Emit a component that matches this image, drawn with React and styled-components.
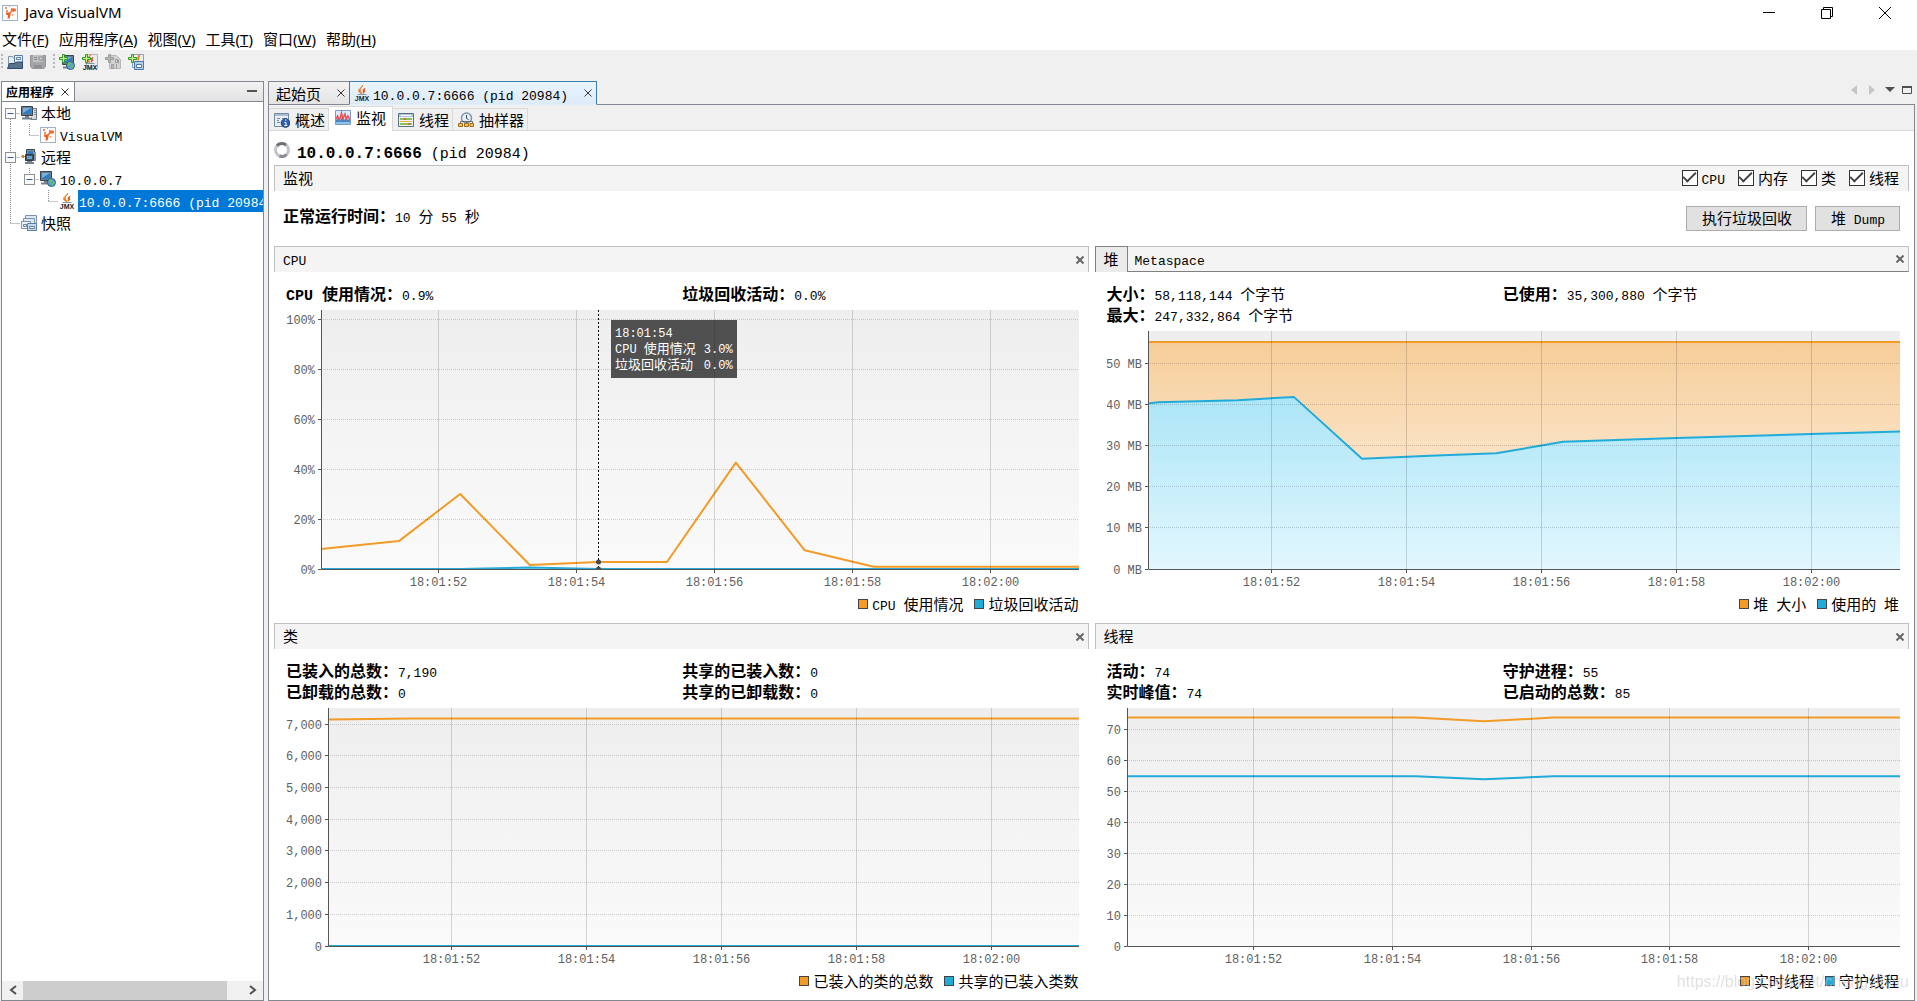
import React, { useLayoutEffect, useRef, useState } from "react";
import styled, { createGlobalStyle, css } from "styled-components";

const MONO = `"Liberation Mono", "Noto Sans CJK SC", monospace`;
const SANS = `"Noto Sans", "Noto Sans CJK SC", sans-serif`;
const CJK = `"Noto Sans CJK SC", "Liberation Mono", sans-serif`;
const ORANGE = "#f29b27";
const BLUE = "#21abd8";

const GlobalStyle = createGlobalStyle`
  * { box-sizing: border-box; }
  body { margin: 0; background: #f0f0f0; }
  button { font: inherit; color: inherit; padding: 0; margin: 0; border: 0; background: none; }
  svg { display: block; }
  ul, dl, dd, h1, h2 { margin: 0; padding: 0; font: inherit; }
  ul { list-style: none; }
`;

/* ---------- text ---------- */

// line-height 0 keeps the smaller latin runs from growing the line
const Latin = styled.span`
  font-family: ${MONO};
  font-size: ${(p) => p.$size}px;
  line-height: 0;
  white-space: pre;
`;

const Mixed = ({ text, size = 13 }) => (
  <span>
    {text
      .split(/([\x20-\x7e]+)/)
      .filter(Boolean)
      .map((part, i) =>
        /[\x20-\x7e]/.test(part) ? (
          <Latin key={i} $size={size}>
            {part}
          </Latin>
        ) : (
          part
        )
      )}
  </span>
);

/* ---------- icons ---------- */

const Icon = styled.svg.attrs({ viewBox: "0 0 16 16", width: 16, height: 16, "aria-hidden": true })`
  flex: none;
`;

const AppIcon = () => (
  <Icon>
    <rect x="0.5" y="0.5" width="15" height="15" fill="#fdfdfd" stroke="#9fb4c8" />
    <path d="M3 2h2v2H3zM7 1h1v1H7zM4 5h2v2H4zM9 3h1v1H9z" fill="#f58a5c" />
    <ellipse cx="11.5" cy="5" rx="2.8" ry="1.8" fill="#ef6a2c" />
    <path d="M10 6L7.5 8.500" stroke="#ef6a2c" strokeWidth="1.500" />
    <path d="M4 7.500h4.500V10L7.500 13.500H5.500L6 10.500 4 9.500z" fill="#ef5f22" />
    <path d="M10 9h1.500v1.500H10z" fill="#f58a5c" />
  </Icon>
);

const Monitor = ({ x = 0, y = 0 }) => (
  <g transform={`translate(${x} ${y})`}>
    <path d="M0.500 0.500h11v9H0.500z" fill="#6d7c8a" stroke="#39434d" />
    <path d="M2 2h8v6H2z" fill="#2f7cc0" />
    <path d="M2 2h8L2 7z" fill="#74b1e2" />
    <path d="M4 10h4v1.500h3v2H1v-2h3z" fill="#77818b" />
  </g>
);

const Globe = () => (
  <g>
    <circle cx="11.500" cy="11.500" r="4" fill="#5b9fd4" stroke="#2b5d8a" />
    <path d="M8.500 9.500c1-1.200 2.500-1.300 3.500-1L11 11l-1.500 1zM11.500 12.500l3-2c.5 1.500-.5 3.500-2 4.300z" fill="#6cc24a" />
  </g>
);

const Plus = () => (
  <path d="M3.500 0.500h2v3h3v2h-3v3h-2v-3h-3v-2h3z" fill="#c4f08f" stroke="#2d9a1e" />
);

const LocalIcon = () => (
  <Icon>
    <path d="M11.500 3.500h4v11h-6" fill="#d5d9dd" stroke="#6f7983" />
    <path d="M13 5.500h2M13 7.500h2M13 9.500h2" stroke="#8b949c" />
    <Monitor y={1} />
  </Icon>
);

const RemoteIcon = () => (
  <Icon>
    <path d="M5.500 0.500h8v6h-8z" fill="#8796a4" stroke="#39434d" />
    <path d="M7 2h5v3H7z" fill="#2f7cc0" />
    <path d="M4.500 5.500h8v6h-8z" fill="#45525f" stroke="#2f3941" />
    <path d="M6 7h5v3H6z" fill="#5fa3dc" />
    <path d="M6 12h5v1h2v2H4v-2h2z" fill="#77818b" />
    <path d="M0 7.500h4M13 8.500h2" stroke="#c98a3a" />
    <path d="M1 6h2v3H1z" fill="#c98a3a" />
    <path d="M13 3h2v9h-2z" fill="#8b949c" />
  </Icon>
);

const HostIcon = () => (
  <Icon>
    <Monitor />
    <Globe />
  </Icon>
);

const AddHostIcon = () => (
  <Icon>
    <Monitor x={3} y={1} />
    <Globe />
    <Plus />
  </Icon>
);

const Flame = () => (
  <g>
    <path d="M8.500 0c.8 2-3.500 3.500-2 6 .5 1 1.500 1.500 1.300 2.500C5.500 8 3.800 6.300 5 4.500 6 3 8.500 2.200 8.500 0z" fill="#ef8122" stroke="#ef8122" />
    <path d="M11 3.500C9.500 4 8.500 5 9.300 6.200c.5.800 0 1.500-.3 2 1.500-.7 2.200-1.800 1.500-2.700-.4-.6 0-1.300.5-2z" fill="#d9541e" stroke="#d9541e" />
    <path d="M3.500 9.500h9" stroke="#7f97ad" />
  </g>
);

const JmxMark = () => (
  <text x="8" y="16" fontSize="7" fontWeight="bold" fontFamily="Liberation Sans, sans-serif" textAnchor="middle" fill="#1c1c1c">
    JMX
  </text>
);

const JmxIcon = () => (
  <Icon>
    <Flame />
    <JmxMark />
  </Icon>
);

const AddJmxIcon = () => (
  <Icon>
    <path d="M4.500 0.500h11v14h-11z" fill="#e6ecf2" stroke="#a9b6c4" />
    <Flame />
    <JmxMark />
    <Plus />
  </Icon>
);

const OpenIcon = () => (
  <Icon>
    <path d="M1.500 14V2.500h4l1.500 2h3V13" fill="#e5edf4" stroke="#8094a8" />
    <path d="M7.500 1.500h8v7h-8z" fill="#e3eefa" stroke="#5b7ea8" />
    <path d="M9.500 3.500h4v2h-4z" fill="#fff" stroke="#5b7ea8" />
    <path d="M0.500 14.500 2.500 9.500H8L9.500 8h6v6.500z" fill="#56728e" stroke="#2f4b67" />
  </Icon>
);

const SaveIcon = () => (
  <Icon>
    <path d="M0.500 1.500h15v11l-1.500 2H2l-1.500-2z" fill="#a3a5a9" stroke="#94969a" />
    <path d="M3 1h10v7H3z" fill="#bfc1c4" />
    <path d="M4 3.500h3M4 5.500h3M9 3h4v3H9z" stroke="#8a8c90" fill="#cfd0d2" />
    <path d="M4 11h8v3H4z" fill="#8d8f93" />
  </Icon>
);

const AddCoreIcon = () => (
  <Icon>
    <path d="M4.500 1.500h7l4 4v9h-11z" fill="#d2d3d4" stroke="#b6b7b8" />
    <path d="M3.500 0.500h2v3h3v2h-3v3h-2v-3h-3v-2h3z" fill="#b5b8b5" stroke="#9a9d9a" />
    <path d="M8 10.500v4M11.500 10v5M13.500 5.500v4" stroke="#9c9d9e" />
    <path d="M6.500 10.500h2v4h-2zM10.500 5.500h2v3h-2z" fill="none" stroke="#9c9d9e" />
  </Icon>
);

const AddSnapshotIcon = () => (
  <Icon>
    <path d="M4.500 0.500h11v13h-11z" fill="#e9f0f7" stroke="#8ba0b8" />
    <path d="M11 1c.5 2-2 3-.5 5.500" fill="none" stroke="#ef8122" strokeWidth="2" />
    <path d="M6.500 7.500h9v8h-9z" fill="#b4cde8" stroke="#4d77a8" />
    <path d="M8.500 10.500h5v3h-5z" fill="#fff" stroke="#4d77a8" />
    <Plus />
  </Icon>
);

const SnapshotsIcon = () => (
  <Icon>
    <path d="M4.500 0.500h11v9h-11z" fill="#dce8f5" stroke="#7d93ab" />
    <path d="M2.500 3.500h11v9h-11z" fill="#dce8f5" stroke="#7d93ab" />
    <path d="M0.500 6.500h9v7h-9z" fill="#edf4fb" stroke="#7d93ab" />
    <path d="M6.500 8.500h9v7h-9z" fill="#c7dbef" stroke="#5f7f9f" />
    <path d="M2.500 9.500h3v2h-3zM8.500 11.500h5v2h-5z" fill="#fff" stroke="#5f7f9f" />
  </Icon>
);

const OverviewIcon = () => (
  <Icon>
    <path d="M0.500 1.500h14v13h-14z" fill="#e6eef7" stroke="#7488a0" />
    <path d="M1 2h13v2H1z" fill="#a9bdd4" />
    <path d="M3 6.500h3M3 8.500h2M3 10.500h3M8 6.500h5" stroke="#7488a0" />
    <circle cx="11.500" cy="11" r="4.300" fill="#2f5fa8" stroke="#1d3f78" />
    <path d="M10.500 10.500h1.500v3M10.300 13.500h3M11 8h1.500" stroke="#fff" fill="none" />
  </Icon>
);

const MonitorTabIcon = () => (
  <Icon>
    <path d="M0.500 0.500h15v14h-15z" fill="#dcebf7" stroke="#7b9cc0" />
    <path d="M1 10l2-2 2 3 2-4 2 3 2-2 2 2 2-2v6H1z" fill="#3d87c8" />
    <path d="M1 9l1.500-3 2 4L6.500 3l1.500 6 2-5 1.500 5L13 6l2 4" fill="none" stroke="#e2555a" strokeWidth="1.500" />
    <path d="M1 12h14v2H1z" fill="#8fc2ea" />
  </Icon>
);

const ThreadsIcon = () => (
  <Icon>
    <path d="M0.500 1.500h15v13h-15z" fill="#f4f7fa" stroke="#5a7087" />
    <path d="M1 2h14v3H1z" fill="#b3c5d8" />
    <path d="M3 3.500h10" stroke="#fff" />
    <path d="M2 7h12M2 12h12" stroke="#86c05a" strokeWidth="2" />
    <path d="M2 9.500h12" stroke="#e9b23a" />
    <path d="M6 7h2M10 12h2" stroke="#dc6840" strokeWidth="2" />
  </Icon>
);

const SamplerIcon = () => (
  <Icon>
    <circle cx="8.500" cy="6" r="5" fill="#e6f0f8" stroke="#8396a8" strokeWidth="1.500" />
    <path d="M8.500 3v3.500l2 1" fill="none" stroke="#36506b" />
    <path d="M2.500 12V9.500h12V12M8.500 12V9" fill="none" stroke="#6a6a6a" />
    <path d="M0.500 11.500h4v3h-4zM6.500 11.500h4v3h-4zM12 11.500h3.500v3H12z" fill="#f2c55b" stroke="#a0691a" />
  </Icon>
);

const Spinner = () => (
  <Icon>
    <circle cx="8" cy="8" r="6.500" fill="none" stroke="#c3c4cc" strokeWidth="3" />
    <path d="M3 3.800A6.500 6.500 0 0 1 12 3" fill="none" stroke="#6f7078" strokeWidth="3" />
    <path d="M12.500 12.500A6.500 6.500 0 0 1 5.500 14" fill="none" stroke="#8b8c95" strokeWidth="3" />
  </Icon>
);

const CloseGlyph = ({ size = 8, width = 2, color = "#666" }) => (
  <svg width={size} height={size} viewBox="0 0 8 8" aria-hidden="true">
    <path d="M0.500 0.500l7 7M7.500 0.500l-7 7" stroke={color} strokeWidth={width} />
  </svg>
);

/* ---------- window chrome ---------- */

const Window = styled.div`
  display: flex;
  flex-direction: column;
  min-height: 100vh;
  font-family: ${CJK};
  font-size: 15px;
  line-height: 21px;
  color: #000;
  white-space: nowrap;
`;

const TitleBar = styled.header`
  display: flex;
  align-items: center;
  gap: 7px;
  height: 25px;
  padding: 0 3px 0 2px;
  background: #fff;
  font-family: ${SANS};

  h1 {
    flex: 1;
  }
`;

const WindowControls = styled.div`
  display: flex;
`;

const WindowButton = styled.button`
  display: grid;
  place-items: center;
  width: 58px;
  height: 25px;
`;

const MenuBar = styled.nav`
  display: flex;
  gap: 10px;
  height: 25px;
  padding: 4px 2px 0;
  background: #fff;
  font-family: ${SANS};
`;

const ToolBar = styled.div`
  display: flex;
  align-items: center;
  height: 23px;
  margin-bottom: 8px;
`;

const Grip = styled.span`
  width: 2px;
  height: 16px;
  margin-left: 1px;
  background: repeating-linear-gradient(#b8b8b8 0 2px, transparent 2px 4px);

  button + & {
    margin-left: 4px;
  }
`;

const ToolButton = styled.button`
  display: grid;
  place-items: center;
  width: 23px;
  height: 23px;
`;

const Workspace = styled.div`
  display: flex;
  flex: 1;
  gap: 4px;
  padding: 0 2px 0 1px;
`;

/* ---------- sidebar ---------- */

const Sidebar = styled.aside`
  display: flex;
  flex-direction: column;
  width: 263px;
  flex: none;
  border: 1px solid #828790;
  background: #fff;
`;

const SidebarHead = styled.div`
  display: flex;
  justify-content: space-between;
  height: 20px;
  border-bottom: 1px solid #828790;
  background: linear-gradient(#f2f2f2, #e2e2e2);
`;

const SidebarTab = styled.div`
  display: flex;
  align-items: center;
  gap: 7px;
  padding: 0 5px 0 4px;
  border-right: 1px solid #828790;
  background: #fff;
  font-size: 12px;
  font-weight: bold;
  line-height: 18px;
`;

const FlatButton = styled.button`
  display: grid;
  place-items: center;
  width: ${(p) => p.$width || 18}px;
  height: 18px;
`;

const Tree = styled.ul`
  flex: 1;
  overflow: hidden;
`;

const TreeRow = styled.li`
  display: flex;
  align-items: center;
  height: 22px;
`;

const NodeLabel = styled.span`
  flex: ${(p) => (p.$selected ? 1 : "none")};
  margin-left: 3px;
  padding-left: 1px;
  line-height: 22px;
  overflow: hidden;
  ${(p) =>
    p.$selected &&
    css`
      background: #0078d7;
      color: #fff;
    `}
`;

const GuideSvg = styled.svg.attrs({ width: 19, height: 22, viewBox: "0 0 19 22", "aria-hidden": true })`
  flex: none;
  stroke: #8c8c8c;
  stroke-dasharray: 1 1;
`;

const GUIDES = {
  first: "M8.500 11v11M8.500 11.500h10",
  line: "M8.500 0v22",
  tee: "M8.500 0v22M8.500 11.500h10",
  elbow: "M8.500 0v11M8.500 11.500h10",
  blank: "",
};

const Guide = ({ kind, open }) => (
  <GuideSvg>
    <path d={GUIDES[kind]} fill="none" />
    {open && (
      <g strokeDasharray="none">
        <rect x="3.500" y="6.500" width="10" height="10" fill="#fafafa" stroke="#919191" />
        <path d="M5.500 11.500h6" stroke="#3b5aa0" />
      </g>
    )}
  </GuideSvg>
);

const nodes = [
  { label: "本地", icon: LocalIcon, guides: ["first"], open: true },
  { label: "VisualVM", icon: AppIcon, guides: ["line", "elbow"] },
  { label: "远程", icon: RemoteIcon, guides: ["tee"], open: true },
  { label: "10.0.0.7", icon: HostIcon, guides: ["line", "elbow"], open: true },
  { label: "10.0.0.7:6666 (pid 20984)", icon: JmxIcon, guides: ["line", "blank", "elbow"], selected: true },
  { label: "快照", icon: SnapshotsIcon, guides: ["elbow"] },
];

const ScrollBar = styled.div`
  display: flex;
  align-items: stretch;
  height: 19px;
  background: #f0f0f0;
`;

const ScrollTrack = styled.div`
  flex: 1;
  padding-right: 15px;

  &::before {
    content: "";
    display: block;
    height: 100%;
    background: #cdcdcd;
  }
`;

const Applications = () => (
  <Sidebar>
    <SidebarHead>
      <SidebarTab>
        应用程序
        <button aria-label="关闭应用程序">
          <CloseGlyph width={1} color="#333" />
        </button>
      </SidebarTab>
      <FlatButton $width={22} aria-label="最小化">
        <svg width="10" height="2">
          <path d="M0 1h10" stroke="#555" strokeWidth="2" />
        </svg>
      </FlatButton>
    </SidebarHead>
    <Tree>
      {nodes.map(({ label, icon: NodeIcon, guides, open, selected }) => (
        <TreeRow key={label}>
          {guides.map((kind, i) => (
            <Guide key={i} kind={kind} open={open && i === guides.length - 1} />
          ))}
          <NodeIcon />
          <NodeLabel $selected={selected}>
            <Mixed text={label} />
          </NodeLabel>
        </TreeRow>
      ))}
    </Tree>
    <ScrollBar>
      <FlatButton $width={21} aria-label="向左滚动">
        <svg width="8" height="10">
          <path d="M7 1L2 5l5 4" fill="none" stroke="#505050" strokeWidth="2" />
        </svg>
      </FlatButton>
      <ScrollTrack />
      <FlatButton $width={21} aria-label="向右滚动">
        <svg width="8" height="10">
          <path d="M1 1l5 4-5 4" fill="none" stroke="#505050" strokeWidth="2" />
        </svg>
      </FlatButton>
    </ScrollBar>
  </Sidebar>
);

/* ---------- document area ---------- */

const Main = styled.main`
  display: flex;
  flex-direction: column;
  flex: 1;
  min-width: 0;
`;

const DocTabs = styled.div`
  display: flex;
  height: 24px;
`;

const DocTab = styled.div`
  display: flex;
  align-items: center;
  gap: ${(p) => (p.$active ? 3 : 16)}px;
  padding: 0 4px 0 ${(p) => (p.$active ? 4 : 7)}px;
  border: 1px solid #828790;
  border-right: 0;
  background: linear-gradient(#f2f2f2, #e4e4e4);
  ${(p) =>
    p.$active &&
    css`
      border: 1px solid #3c7fb1;
      border-bottom-color: #e2effb;
      background: linear-gradient(#eaf5fe, #dcebfa);
    `}

  button {
    margin-left: ${(p) => (p.$active ? 13 : 0)}px;
  }
`;

const DocTools = styled.div`
  display: flex;
  flex: 1;
  justify-content: flex-end;
  border-bottom: 1px solid #828790;
`;

const DocBody = styled.section`
  display: flex;
  flex-direction: column;
  flex: 1;
  border: 1px solid #828790;
  border-top: 0;
  background: #fff;
`;

const ViewTabs = styled.div`
  display: flex;
  align-items: flex-end;
  height: 26px;
  border-bottom: 1px solid #d9d9d9;
  background: #f0f0f0;
`;

const ViewTab = styled.button`
  display: flex;
  align-items: center;
  gap: 5px;
  height: 22px;
  padding: 0 3px 0 5px;
  border: 1px solid #d9d9d9;
  border-left: 0;
  border-bottom: 0;
  ${(p) =>
    p.$active &&
    css`
      height: 25px;
      margin-bottom: -1px;
      padding: 0 6px 3px 6px;
      background: #fff;
    `}
`;

const ViewTitle = styled.h2`
  display: flex;
  align-items: center;
  gap: 7px;
  height: 34px;
  padding: 4px 5px 0;

  > span {
    padding-top: 2px;
  }
`;

const Bold = styled.strong`
  font-size: 16px;
  font-weight: bold;
`;

const OptionsBar = styled.div`
  display: flex;
  align-items: center;
  gap: 13px;
  height: 26px;
  margin: 0 5px;
  padding: 0 9px 2px 8px;
  border: 1px solid #bfbfbf;
  border-bottom: 0;
  background: #f4f4f4;
`;

const OptionsTitle = styled.span`
  flex: 1;
`;

const Check = styled.label`
  display: flex;
  align-items: center;
  gap: 4px;

  input {
    appearance: none;
    display: grid;
    place-items: center;
    width: 16px;
    height: 16px;
    margin: 0;
    border: 1px solid #333;
    background: #fff;
  }

  input:checked::after {
    content: "";
    width: 11px;
    height: 5px;
    margin-bottom: 4px;
    border: solid #444;
    border-width: 0 0 2px 2px;
    transform: rotate(-45deg);
  }
`;

const ActionRow = styled.div`
  display: flex;
  align-items: center;
  gap: 8px;
  height: 55px;
  padding: 0 14px;

  p {
    flex: 1;
    margin: 0;
    padding-bottom: 6px;
  }
`;

const PushButton = styled.button`
  height: 25px;
  padding: 0 14px 2px 15px;
  border: 1px solid #adadad;
  background: #e1e1e1;
  line-height: 21px;
`;

const PanelGrid = styled.div`
  display: grid;
  flex: 1;
  grid-template-columns: 1fr 1fr;
  grid-auto-rows: 1fr;
  column-gap: 6px;
  padding: 0 5px;
`;

const PanelBox = styled.section`
  display: flex;
  flex-direction: column;
  min-width: 0;
`;

const PanelHead = styled.div`
  display: flex;
  align-items: center;
  height: 26px;
  padding-right: 4px;
  border: 1px solid #bfbfbf;
  border-bottom: ${(p) => (p.$tabbed ? "1px solid #808080" : "0")};
  background: #f4f4f4;

  > h2 {
    flex: 1;
    padding: 0 0 3px 8px;
  }
`;

const PanelTab = styled.button`
  height: 26px;
  margin: 0 0 0 -1px;
  padding: 0 8px 2px;
  ${(p) =>
    p.$active &&
    css`
      border: 1px solid #808080;
      border-bottom: 0;
      background: #ebebeb;
    `}
`;

const Spacer = styled.span`
  flex: 1;
`;

const PanelBody = styled.div`
  display: flex;
  flex-direction: column;
  flex: 1;
  padding: 11px 10px 9px 12px;
`;

const Stats = styled.dl`
  display: grid;
  grid-template-columns: 1fr 1fr;
  grid-auto-rows: 21px;
  margin-bottom: 6px;

  div {
    display: flex;
    align-items: baseline;
  }

  dt {
    font-size: 16px;
    font-weight: bold;
  }
`;

const ChartArea = styled.div`
  position: relative;
  flex: 1;
  min-height: 120px;

  svg {
    position: absolute;
    inset: 0;
  }

  text {
    font-family: ${MONO};
    font-size: 12px;
    fill: #606060;
  }
`;

const Tooltip = styled.table`
  position: absolute;
  top: 10px;
  padding: 4px 4px 6px;
  border-spacing: 0;
  background: rgba(20, 20, 20, 0.73);
  color: #fff;
  font-size: 13px;
  line-height: 16px;

  td, th {
    padding: 0;
    font-weight: normal;
    text-align: left;
  }

  th + td {
    padding-left: 8px;
    text-align: right;
  }
`;

const Legend = styled.ul`
  display: flex;
  justify-content: flex-end;
  gap: 11px;
  height: 20px;
  line-height: 20px;

  li {
    display: flex;
    align-items: center;
    gap: 4px;
  }
`;

const Swatch = styled.i`
  width: 10px;
  height: 10px;
  border: 1px solid #444;
  background: ${(p) => p.$color};
`;

const AXIS_SPACE = 25;
const TIMES = [52, 54, 56, 58, 60];

const timeLabel = (s) => (s < 60 ? `18:01:${s}` : `18:02:0${s - 60}`);

const Chart = ({ id, gutter, start, span, max, step, format, series, filled, cursor, tip }) => {
  const ref = useRef(null);
  const [size, setSize] = useState({ w: 0, h: 0 });

  useLayoutEffect(() => {
    const measure = () => {
      const { clientWidth, clientHeight } = ref.current;
      setSize({ w: clientWidth, h: clientHeight });
    };
    measure();
    const observer = new ResizeObserver(measure);
    observer.observe(ref.current);
    return () => observer.disconnect();
  }, []);

  const bottom = size.h - AXIS_SPACE;
  const x = (t) => gutter + ((t - start) / span) * (size.w - gutter);
  const y = (v) => bottom - (v / max) * bottom;
  const snap = (n) => Math.floor(n) + 0.5;
  const ticks = [];
  for (let v = 0; v <= max; v += step) ticks.push(v);
  const toPath = (points) => points.map(([t, v], i) => `${i ? "L" : "M"}${x(t)} ${y(v)}`).join("");

  return (
    <ChartArea ref={ref}>
      {size.w > 0 && (
        <svg width={size.w} height={size.h}>
          <defs>
            <linearGradient id={`${id}-bg`} x1="0" y1="0" x2="0" y2="1">
              <stop offset="0" stopColor="#eeeeee" />
              <stop offset="1" stopColor="#fafafa" />
            </linearGradient>
            <linearGradient id={`${id}-0`} x1="0" y1="0" x2="0" y2="1">
              <stop offset="0" stopColor="#f6cd99" />
              <stop offset="0.450" stopColor="#fae0c0" />
              <stop offset="1" stopColor="#fdf2e4" />
            </linearGradient>
            <linearGradient id={`${id}-1`} x1="0" y1="0" x2="0" y2="1">
              <stop offset="0" stopColor="#ace5f7" />
              <stop offset="1" stopColor="#e2f7fe" />
            </linearGradient>
            <clipPath id={`${id}-clip`}>
              <rect x={gutter} y="0" width={size.w - gutter} height={bottom} />
            </clipPath>
          </defs>
          <rect x={gutter} y="0" width={size.w - gutter} height={bottom} fill={`url(#${id}-bg)`} />
          <g clipPath={`url(#${id}-clip)`} strokeLinejoin="round">
            {series.map((s, i) => (
              <g key={s.color}>
                {filled && (
                  <path d={`${toPath(s.points)}V${bottom}H${gutter}Z`} fill={`url(#${id}-${i})`} />
                )}
                <path d={toPath(s.points)} fill="none" stroke={s.color} strokeWidth="2" />
              </g>
            ))}
          </g>
          {ticks.map((v) => (
            <g key={v}>
              {v > 0 && (
                <path d={`M${gutter} ${snap(y(v))}H${size.w}`} stroke="#000" strokeOpacity="0.180" strokeDasharray="1 1" />
              )}
              <path d={`M${gutter - 3} ${snap(y(v))}h3`} stroke="#555" />
              <text x={gutter - 6} y={snap(y(v)) + 4} textAnchor="end">
                {format(v)}
              </text>
            </g>
          ))}
          {TIMES.map((t) => (
            <g key={t}>
              <path d={`M${snap(x(t))} 0V${bottom}`} stroke="#000" strokeOpacity="0.150" />
              <path d={`M${snap(x(t))} ${bottom}v4`} stroke="#555" />
              <text x={snap(x(t))} y={bottom + 17} textAnchor="middle">
                {timeLabel(t)}
              </text>
            </g>
          ))}
          {cursor && (
            <g clipPath={`url(#${id}-clip)`}>
              <path d={`M${snap(x(cursor.t))} 0V${bottom}`} stroke="#000" strokeDasharray="2 2" />
              {cursor.values.map((v) => (
                <circle key={v} cx={snap(x(cursor.t))} cy={y(v)} r="2.500" fill="#484848" />
              ))}
            </g>
          )}
          <path d={`M${gutter + 0.5} 0V${snap(bottom)}H${size.w}`} fill="none" stroke="#555" />
        </svg>
      )}
      {tip && size.w > 0 && (
        <Tooltip style={{ left: Math.round(x(cursor.t)) + 13 }}>
          <tbody>
            <tr>
              <td colSpan={2}>
                <Mixed text={tip.time} size={12} />
              </td>
            </tr>
            {tip.rows.map(([name, value]) => (
              <tr key={name}>
                <th scope="row">
                  <Mixed text={name} size={12} />
                </th>
                <td>
                  <Mixed text={value} size={12} />
                </td>
              </tr>
            ))}
          </tbody>
        </Tooltip>
      )}
    </ChartArea>
  );
};

const panels = [
  {
    id: "cpu",
    title: "CPU",
    stats: [
      ["CPU 使用情况：", "0.9%"],
      ["垃圾回收活动：", "0.0%"],
    ],
    legend: ["CPU 使用情况", "垃圾回收活动"],
    chart: {
      gutter: 35,
      start: 50.29,
      span: 11,
      max: 104,
      step: 20,
      format: (v) => `${v}%`,
      series: [
        {
          color: ORANGE,
          points: [
            [50.29, 8], [51.42, 11.2], [52.31, 30.1], [53.32, 1.6], [54.31, 2.8], [55.31, 2.8],
            [56.31, 42.7], [57.31, 7.5], [58.31, 0.9], [61.29, 0.9],
          ],
        },
        { color: BLUE, points: [[50.29, 0], [52.31, 0], [53.32, 0.6], [54.31, 0], [61.29, 0]] },
      ],
      cursor: { t: 54.31, values: [2.8, 0] },
      tip: {
        time: "18:01:54",
        rows: [
          ["CPU 使用情况", "3.0%"],
          ["垃圾回收活动", "0.0%"],
        ],
      },
    },
  },
  {
    id: "heap",
    tabs: ["堆", "Metaspace"],
    stats: [
      ["大小：", "58,118,144 个字节"],
      ["已使用：", "35,300,880 个字节"],
      ["最大：", "247,332,864 个字节"],
    ],
    legend: ["堆 大小", "使用的 堆"],
    chart: {
      gutter: 41,
      start: 50.17,
      span: 11.14,
      max: 57.8,
      step: 10,
      filled: true,
      format: (v) => `${v} MB`,
      series: [
        { color: ORANGE, points: [[50.17, 55.1], [61.31, 55.1]] },
        {
          color: BLUE,
          points: [
            [50.17, 40.2], [50.32, 40.5], [51.5, 41], [52.33, 41.8], [53.34, 26.8], [54.35, 27.5],
            [55.33, 28.1], [56.32, 30.9], [58, 31.8], [60, 32.8], [61.31, 33.4],
          ],
        },
      ],
    },
  },
  {
    id: "classes",
    title: "类",
    stats: [
      ["已装入的总数：", "7,190"],
      ["共享的已装入数：", "0"],
      ["已卸载的总数：", "0"],
      ["共享的已卸载数：", "0"],
    ],
    legend: ["已装入的类的总数", "共享的已装入类数"],
    chart: {
      gutter: 42,
      start: 50.17,
      span: 11.13,
      max: 7515,
      step: 1000,
      format: (v) => v.toLocaleString("en-US"),
      series: [
        { color: ORANGE, points: [[50.17, 7150], [51.4, 7185], [61.3, 7185]] },
        { color: BLUE, points: [[50.17, 0], [61.3, 0]] },
      ],
    },
  },
  {
    id: "threads",
    title: "线程",
    stats: [
      ["活动：", "74"],
      ["守护进程：", "55"],
      ["实时峰值：", "74"],
      ["已启动的总数：", "85"],
    ],
    legend: ["实时线程", "守护线程"],
    chart: {
      gutter: 20,
      start: 50.17,
      span: 11.15,
      max: 77.1,
      step: 10,
      format: (v) => `${v}`,
      series: [
        { color: ORANGE, points: [[50.17, 74], [54.33, 74], [55.32, 72.8], [56.32, 74], [61.32, 74]] },
        { color: BLUE, points: [[50.17, 55], [54.33, 55], [55.32, 54], [56.32, 55], [61.32, 55]] },
      ],
    },
  },
];

const Panel = ({ id, title, tabs, stats, legend, chart }) => (
  <PanelBox>
    <PanelHead $tabbed={!!tabs}>
      {title && (
        <h2>
          <Mixed text={title} />
        </h2>
      )}
      {tabs &&
        tabs.map((tab, i) => (
          <PanelTab key={tab} $active={i === 0}>
            <Mixed text={tab} />
          </PanelTab>
        ))}
      {tabs && <Spacer />}
      <button aria-label="关闭">
        <CloseGlyph />
      </button>
    </PanelHead>
    <PanelBody>
      <Stats>
        {stats.map(([name, value]) => (
          <div key={name}>
            <dt>
              <Mixed text={name} size={15} />
            </dt>
            <dd>
              <Mixed text={value} />
            </dd>
          </div>
        ))}
      </Stats>
      <Chart id={id} {...chart} />
      <Legend>
        {legend.map((name, i) => (
          <li key={name}>
            <Swatch $color={i ? BLUE : ORANGE} />
            <Mixed text={name} />
          </li>
        ))}
      </Legend>
    </PanelBody>
  </PanelBox>
);

const Watermark = styled.span`
  position: fixed;
  right: 8px;
  bottom: 8px;
  color: rgba(200, 200, 200, 0.55);
  font-family: "Liberation Sans", sans-serif;
  font-size: 16px;
  line-height: 22px;
  pointer-events: none;
`;

const menus = [
  ["文件", "F"],
  ["应用程序", "A"],
  ["视图", "V"],
  ["工具", "T"],
  ["窗口", "W"],
  ["帮助", "H"],
];

const views = [
  ["概述", OverviewIcon],
  ["监视", MonitorTabIcon],
  ["线程", ThreadsIcon],
  ["抽样器", SamplerIcon],
];

const App = () => (
  <>
    <GlobalStyle />
    <Window>
      <TitleBar>
        <AppIcon />
        <h1>Java VisualVM</h1>
        <WindowControls>
          <WindowButton aria-label="最小化">
            <svg width="12" height="12">
              <path d="M0 5.500h12" stroke="#000" />
            </svg>
          </WindowButton>
          <WindowButton aria-label="还原">
            <svg width="12" height="12">
              <path d="M0.500 2.500h9v9h-9zM2.500 2V0.500h9v9H10" fill="none" stroke="#000" />
            </svg>
          </WindowButton>
          <WindowButton aria-label="关闭">
            <svg width="12" height="12">
              <path d="M0 0l12 12M12 0L0 12" stroke="#000" />
            </svg>
          </WindowButton>
        </WindowControls>
      </TitleBar>
      <MenuBar>
        {menus.map(([name, key]) => (
          <button key={key}>
            {name}(<u>{key}</u>)
          </button>
        ))}
      </MenuBar>
      <ToolBar>
        <Grip />
        <ToolButton aria-label="装入"><OpenIcon /></ToolButton>
        <ToolButton aria-label="另存为" disabled><SaveIcon /></ToolButton>
        <Grip />
        <ToolButton aria-label="添加远程主机"><AddHostIcon /></ToolButton>
        <ToolButton aria-label="添加 JMX 连接"><AddJmxIcon /></ToolButton>
        <ToolButton aria-label="添加核心 dump" disabled><AddCoreIcon /></ToolButton>
        <ToolButton aria-label="添加快照"><AddSnapshotIcon /></ToolButton>
      </ToolBar>
      <Workspace>
        <Applications />
        <Main>
          <DocTabs>
            <DocTab>
              起始页
              <button aria-label="关闭起始页">
                <CloseGlyph width={1} color="#333" />
              </button>
            </DocTab>
            <DocTab $active>
              <JmxIcon />
              <Mixed text="10.0.0.7:6666 (pid 20984)" />
              <button aria-label="关闭连接">
                <CloseGlyph width={1} color="#333" />
              </button>
            </DocTab>
            <DocTools>
              <FlatButton aria-label="上一个" disabled>
                <svg width="6" height="10"><path d="M6 0v10L0 5z" fill="#c6c6c6" /></svg>
              </FlatButton>
              <FlatButton aria-label="下一个" disabled>
                <svg width="6" height="10"><path d="M0 0v10l6-5z" fill="#c6c6c6" /></svg>
              </FlatButton>
              <FlatButton aria-label="文档列表">
                <svg width="10" height="6"><path d="M0 0h10L5 5z" fill="#505050" /></svg>
              </FlatButton>
              <FlatButton $width={16} aria-label="最大化">
                <svg width="10" height="8">
                  <path d="M0.500 1h9v6.500h-9z" fill="none" stroke="#505050" />
                  <path d="M0 1h10" stroke="#505050" strokeWidth="2" />
                </svg>
              </FlatButton>
            </DocTools>
          </DocTabs>
          <DocBody>
            <ViewTabs>
              {views.map(([name, ViewIcon], i) => (
                <ViewTab key={name} $active={i === 1}>
                  <ViewIcon />
                  {name}
                </ViewTab>
              ))}
            </ViewTabs>
            <ViewTitle>
              <Spinner />
              <span>
                <Bold>
                  <Mixed text="10.0.0.7:6666" size={16} />
                </Bold>
                <Mixed text=" (pid 20984)" size={15} />
              </span>
            </ViewTitle>
            <OptionsBar>
              <OptionsTitle>监视</OptionsTitle>
              {["CPU", "内存", "类", "线程"].map((name) => (
                <Check key={name}>
                  <input type="checkbox" defaultChecked />
                  <Mixed text={name} />
                </Check>
              ))}
            </OptionsBar>
            <ActionRow>
              <p>
                <Bold>正常运行时间：</Bold>
                <Mixed text="10 分 55 秒" />
              </p>
              <PushButton>执行垃圾回收</PushButton>
              <PushButton>
                <Mixed text="堆 Dump" />
              </PushButton>
            </ActionRow>
            <PanelGrid>
              {panels.map((panel) => (
                <Panel key={panel.id} {...panel} />
              ))}
            </PanelGrid>
          </DocBody>
        </Main>
      </Workspace>
      <Watermark>https://blog.csdn.net/chengyinwu</Watermark>
    </Window>
  </>
);

export default App;
